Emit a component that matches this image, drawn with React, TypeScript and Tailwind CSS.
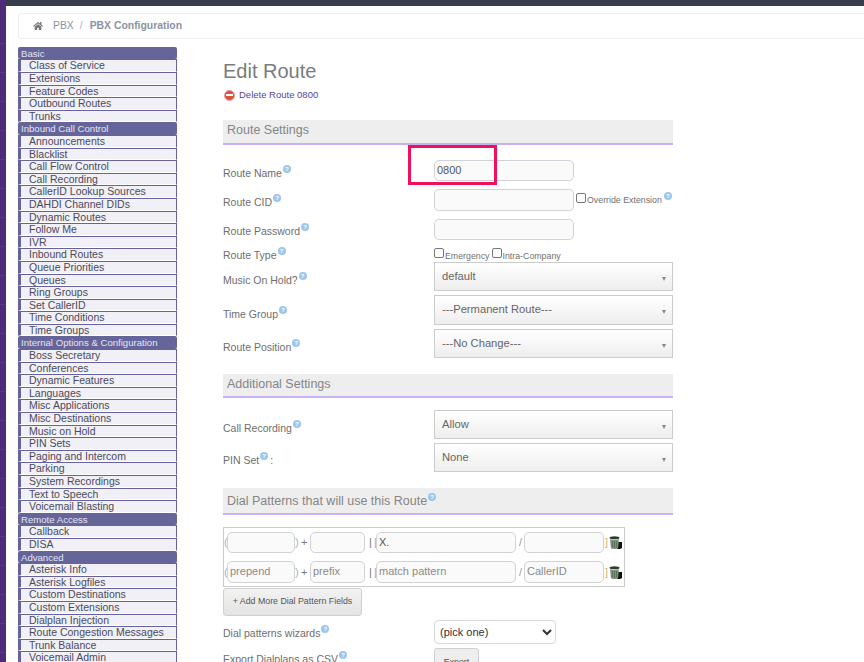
import { FaHome } from "react-icons/fa";

const groups: [string, string[]][] = [
  ["Basic", ["Class of Service", "Extensions", "Feature Codes", "Outbound Routes", "Trunks"]],
  ["Inbound Call Control", ["Announcements", "Blacklist", "Call Flow Control", "Call Recording", "CallerID Lookup Sources", "DAHDI Channel DIDs", "Dynamic Routes", "Follow Me", "IVR", "Inbound Routes", "Queue Priorities", "Queues", "Ring Groups", "Set CallerID", "Time Conditions", "Time Groups"]],
  ["Internal Options & Configuration", ["Boss Secretary", "Conferences", "Dynamic Features", "Languages", "Misc Applications", "Misc Destinations", "Music on Hold", "PIN Sets", "Paging and Intercom", "Parking", "System Recordings", "Text to Speech", "Voicemail Blasting"]],
  ["Remote Access", ["Callback", "DISA"]],
  ["Advanced", ["Asterisk Info", "Asterisk Logfiles", "Custom Destinations", "Custom Extensions", "Dialplan Injection", "Route Congestion Messages", "Trunk Balance", "Voicemail Admin"]],
];

function Help({ className = "" }: { className?: string }) {
  return (
    <span className={"inline-flex h-[8px] w-[8px] shrink-0 items-center justify-center rounded-full bg-[#9cc7ec] text-[6px] font-bold leading-none text-white " + className}>?</span>
  );
}

function Label({ text, help = true, suffix, top = 0 }: { text: string; help?: boolean; suffix?: string; top?: number }) {
  return (
    <div className="flex w-[211px] shrink-0 items-start text-[10.5px] leading-[13px] text-[#6e6e6e]" style={{ paddingTop: top }}>
      <span>{text}</span>
      {help && <Help className="ml-[1px] mt-[-2px]" />}
      {suffix && <span className="ml-[2px]">{suffix}</span>}
    </div>
  );
}

function TextBox({ value = "", placeholder = "", className = "" }: { value?: string; placeholder?: string; className?: string }) {
  return (
    <div className={"flex items-center rounded-[5px] border border-[#d2d2d2] bg-[#fafafa] pl-[2px] text-[11px] " + (value ? "text-[#555555] " : "text-[#8a8a8a] ") + className}>
      {value || placeholder}
    </div>
  );
}

function FakeSelect({ value, className = "" }: { value: string; className?: string }) {
  return (
    <div className={"flex w-[239px] items-start justify-between border border-[#cccccc] bg-gradient-to-b from-[#ffffff] to-[#eeeeee] pl-[7px] pr-[6px] pt-[7px] text-[11.2px] leading-[13px] text-[#666666] " + className}>
      <span>{value}</span>
      <span className="mt-[7px] h-0 w-0 border-x-[2.5px] border-t-[4px] border-x-transparent border-t-[#888888]" />
    </div>
  );
}

function SectionHead({ text, help, className = "" }: { text: string; help?: boolean; className?: string }) {
  return (
    <div className={"flex items-start border-b-[2px] border-[#c9b2f2] bg-[#eeeeee] pl-[4px] text-[12.5px] text-[#858585] " + className}>
      <span>{text}</span>
      {help && <Help className="ml-[1px] mt-[1px]" />}
    </div>
  );
}

function Check({ className = "" }: { className?: string }) {
  return <span className={"inline-block h-[10px] w-[10px] shrink-0 rounded-[2px] border border-[#777777] bg-white " + className} />;
}

function Trash() {
  return (
    <svg width="13" height="13" viewBox="0 0 13 13" className="ml-[1px] shrink-0">
      <path d="M9 6h4v6l-2 1H8z" fill="#111111" />
      <ellipse cx="5.5" cy="1.8" rx="5" ry="1.6" fill="#2f3a2f" />
      <path d="M1 2.5c2 1.3 7 1.3 9 0l-.8 9c-.1 1-1.6 1.5-3.7 1.5s-3.6-.5-3.7-1.5z" fill="#82957f" />
      <path d="M1.5 3.5h8" stroke="#c3d0c0" strokeWidth="0.8" />
      <path d="M3.3 5v6.500M5.500 5v7M7.700 5v6.500" stroke="#4f5f52" strokeWidth="0.8" />
    </svg>
  );
}

function PatternRow({ a, b, c, d, className = "" }: { a?: string; b?: string; c: string; d?: string; className?: string }) {
  const sep = "whitespace-nowrap text-[11px] text-[#777777]";
  const ph = c !== "X.";
  return (
    <div className={"flex items-center " + className}>
      <span className="w-[3px] text-[11px] text-[#8fb8d8]">(</span>
      <TextBox placeholder={ph ? a : ""} className="h-full w-[68px]" />
      <span className="w-[6px] text-[11px] text-[#8fb8d8]">)</span>
      <span className={"w-[9px] " + sep}>+</span>
      <TextBox placeholder={ph ? b : ""} className="h-full w-[55px]" />
      <span className={"ml-[4px] w-[5px] " + sep}>|</span>
      <span className="w-[2px] text-[11px] text-[#8fb8d8]">[</span>
      <TextBox value={ph ? "" : c} placeholder={ph ? c : ""} className="h-full w-[140px]" />
      <span className="ml-[3px] w-[5px] text-[11px] text-[#a89a88]">/</span>
      <TextBox placeholder={ph ? d : ""} className="h-full w-[80px]" />
      <span className="ml-[1px] w-[3px] text-[11px] text-[#e0b070]">]</span>
      <Trash />
    </div>
  );
}

export default function App() {
  return (
    <div className="flex h-[662px] w-[864px] overflow-hidden bg-white font-['Liberation_Sans',Arial,sans-serif]">
      <div className="w-[6px] shrink-0 bg-[repeating-linear-gradient(180deg,#4f2a78_0,#4f2a78_28px,#5a3584_28px,#5a3584_29px)] [background-position:0_15px]" />
      <div className="relative min-w-0 flex-1">
        <div className="h-[6px] bg-[#363c4a]" />
        <div className="ml-[12px] mt-[7px] flex h-[26px] w-[860px] items-center rounded-[3px] border border-[#eeeeee] pl-[14px] text-[10.4px] text-[#8b93a0]">
          <FaHome className="h-[10px] w-[10px] text-[#777777]" />
          <span className="ml-[10px]">PBX</span>
          <span className="mx-[6px] text-[#b5b5b5]">/</span>
          <span className="ml-[1px] font-bold">PBX Configuration</span>
        </div>
        <div className="mt-[8px] flex">
          <nav className="ml-[12px] mt-[-0.2px] w-[159px] shrink-0">
            {groups.map(([name, items]) => (
              <div key={name}>
                <div className="h-[12.6px] rounded-[2px] bg-[#66659a] pl-[3px] text-[9.6px] leading-[13px] text-[#e4e4f4]">{name}</div>
                {items.map((item) => (
                  <div key={item} className="h-[12.6px] border-r border-t border-b border-l-[3px] border-[#66639a] border-b-white bg-[#f1f0f6] pl-[8px] text-[10.5px] leading-[10px] text-[#4a4a5c]">{item}</div>
                ))}
              </div>
            ))}
          </nav>
          <main className="ml-[46px] w-[450px] shrink-0">
            <h1 className="mt-[10px] h-[28px] text-[20px] leading-[28px] text-[#7b7b7b]">Edit Route</h1>
            <div className="mt-[3px] flex h-[14px] items-center text-[9.5px] text-[#5b3f9e]">
              <span className="ml-[1px] flex h-[11px] w-[11px] items-center justify-center rounded-full border border-[#f0a08e] bg-[#e0503f]">
                <span className="h-[2px] w-[7px] bg-white" />
              </span>
              <span className="ml-[4px]">Delete Route 0800</span>
            </div>
            <SectionHead text="Route Settings" className="mt-[18px] h-[25px] pt-[1px]" />
            <div className="mt-[15px] flex h-[22px]">
              <Label text="Route Name" top={7} />
              <TextBox value="0800" className="h-[21px] w-[140px]" />
            </div>
            <div className="mt-[7px] flex h-[22px]">
              <Label text="Route CID" top={7} />
              <TextBox className="h-[22px] w-[140px]" />
              <Check className="ml-[2px] mt-[4px]" />
              <span className="ml-[1px] mt-[6px] text-[8.8px] leading-[10px] text-[#707070]">Override Extension</span>
              <Help className="ml-[2px] mt-[3px]" />
            </div>
            <div className="mt-[8px] flex h-[21px]">
              <Label text="Route Password" top={6} />
              <TextBox className="h-[21px] w-[140px]" />
            </div>
            <div className="mt-[8px] flex h-[14px]">
              <Label text="Route Type" top={1} />
              <Check />
              <span className="ml-[1px] mt-[3px] text-[8.8px] leading-[10px] text-[#707070]">Emergency</span>
              <Check className="ml-[2px]" />
              <span className="ml-[1px] mt-[3px] text-[8.8px] leading-[10px] text-[#707070]">Intra-Company</span>
            </div>
            <div className="flex h-[29px]">
              <Label text="Music On Hold?" top={12} />
              <FakeSelect value="default" className="h-[29px]" />
            </div>
            <div className="mt-[4px] flex h-[30px]">
              <Label text="Time Group" top={13} />
              <FakeSelect value="---Permanent Route---" className="h-[30px]" />
            </div>
            <div className="mt-[4px] flex h-[29px]">
              <Label text="Route Position" top={12} />
              <FakeSelect value="---No Change---" className="h-[29px]" />
            </div>
            <SectionHead text="Additional Settings" className="mt-[16px] h-[24px] pt-[1px]" />
            <div className="mt-[12px] flex h-[29px]">
              <Label text="Call Recording" top={12} />
              <FakeSelect value="Allow" className="h-[29px]" />
            </div>
            <div className="mt-[4px] flex h-[29px]">
              <Label text="PIN Set" suffix=":" top={11} />
              <FakeSelect value="None" className="h-[29px]" />
            </div>
            <SectionHead text="Dial Patterns that will use this Route" help className="mt-[16px] h-[27px] pt-[4px]" />
            <div className="mt-[12px] h-[60px] w-[402px] border border-[#cccccc] pt-[4px]">
              <PatternRow c="X." className="h-[21px]" />
              <PatternRow a="prepend" b="prefix" c="match pattern" d="CallerID" className="mt-[8px] h-[22px] [&>div]:pb-[2px]" />
            </div>
            <div className="mt-[1px] flex h-[28px] w-[139px] items-center justify-center rounded-[3px] border border-[#d0d0d0] bg-gradient-to-b from-[#f2f2f2] to-[#e4e4e4] text-[8.8px] text-[#555555]">+ Add More Dial Pattern Fields</div>
            <div className="mt-[4px] flex h-[24px]">
              <Label text="Dial patterns wizards" top={7} />
              <select className="h-[24px] w-[122px] rounded-[4px] border border-[#d8d8d8] bg-white pl-[1px] text-[11px] text-[#333333]">
                <option>(pick one)</option>
              </select>
            </div>
            <div className="mt-[4px] flex h-[30px]">
              <Label text="Export Dialplans as CSV" top={5} />
              <div className="flex h-[30px] w-[45px] items-start justify-center rounded-[3px] border border-[#d0d0d0] bg-[#eeeeee] pt-[7px] text-[8.8px] text-[#555555]">Export</div>
            </div>
          </main>
        </div>
        <div className="absolute left-[402px] top-[145px] h-[40px] w-[89px] border-[3px] border-[#f2105e]" />
      </div>
    </div>
  );
}
